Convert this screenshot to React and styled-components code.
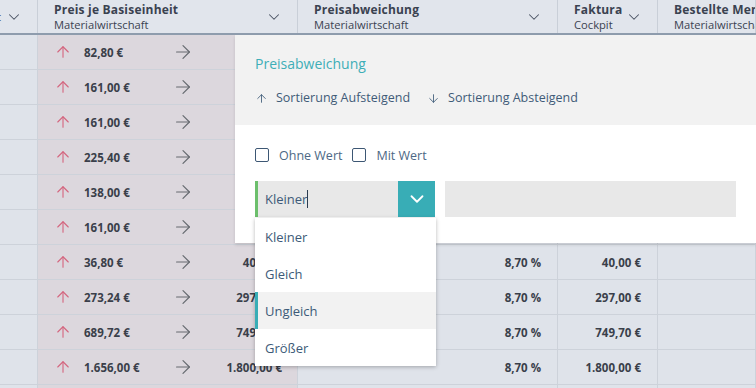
import styled, { createGlobalStyle } from 'styled-components';
import { ArrowDown, ArrowRight, ArrowUp, ChevronDown } from 'lucide-react';

const GlobalStyle = createGlobalStyle`
  html, body {
    margin: 0;
    padding: 0;
  }
  body {
    font-family: "Open Sans", "Liberation Sans", sans-serif;
    background: #dfe3ea;
    overflow: hidden;
  }
`;

const COLS = '38px 260px 260px 100px 1fr';

const rows = [
  ['82,80 €', '90,00 €'],
  ['161,00 €', '175,00 €'],
  ['161,00 €', '175,00 €'],
  ['225,40 €', '245,00 €'],
  ['138,00 €', '150,00 €'],
  ['161,00 €', '175,00 €'],
  ['36,80 €', '40,00 €'],
  ['273,24 €', '297,00 €'],
  ['689,72 €', '749,70 €'],
  ['1.656,00 €', '1.800,00 €'],
  ['92,00 €', '100,00 €'],
];

const options = ['Kleiner', 'Gleich', 'Ungleich', 'Größer'];

// --- table ---
const Page = styled.div`
  position: relative;
  width: 756px;
  height: 388px;
  overflow: hidden;
`;

const HeaderRow = styled.div`
  display: grid;
  grid-template-columns: ${COLS};
  height: 33px;
  background: #e1e5ec;
  border-bottom: 2px solid #8e9cad;
`;

const HeadCell = styled.div`
  display: flex;
  align-items: center;
  justify-content: ${p => (p.$end ? 'flex-end' : 'flex-start')};
  gap: 4px;
  padding: 0 14px 0 16px;
  border-right: 1px solid #c9cfd8;
  overflow: hidden;
  color: #3a4250;
  white-space: nowrap;

  svg {
    flex-shrink: 0;
    color: #4a5262;
  }
`;

const HeadText = styled.div`
  flex: ${p => (p.$fixed ? 'none' : 1)};
  min-width: 0;
  line-height: 15px;
`;

const HeadTitle = styled.div`
  font-size: 12px;
  font-weight: 700;
  letter-spacing: 0.2px;
`;

const HeadSub = styled.div`
  font-size: 11.2px;
`;

const Row = styled.div`
  display: grid;
  grid-template-columns: ${COLS};
  height: 34px;
  border-bottom: 1px solid #cdd2da;
`;

const Cell = styled.div`
  display: flex;
  align-items: center;
  justify-content: flex-end;
  padding: 0 16px 0 15px;
  background: ${p => (p.$hl ? '#dcd7dd' : '#dfe3ea')};
  border-right: 1px solid #cdd2da;
  font-size: 11.5px;
  font-weight: 700;
  color: #3a3f4a;
  white-space: nowrap;
`;

const PriceCell = styled(Cell)`
  justify-content: flex-start;
  padding: 0 15px 0 16px;
`;

const UpMark = styled(ArrowUp)`
  color: #d4667f;
  flex-shrink: 0;
`;

const NextMark = styled(ArrowRight)`
  color: #666a70;
  flex-shrink: 0;
`;

const OldValue = styled.span`
  width: 88px;
  margin-left: 12px;
`;

const NewValue = styled.span`
  flex: 1;
  text-align: right;
`;

// --- filter panel ---
const Panel = styled.div`
  position: absolute;
  left: 235px;
  top: 35px;
  right: 0;
  background: #fff;
  box-shadow: 0 2px 3px rgba(0, 0, 0, 0.12);
`;

const PanelHead = styled.div`
  background: #f2f2f2;
  padding: 19px 20px 18px;
`;

const Title = styled.div`
  font-size: 14px;
  line-height: 20px;
  color: #3eaeb7;
  margin-bottom: 15px;
`;

const SortRow = styled.div`
  display: flex;
  gap: 17px;
`;

const SortBtn = styled.div`
  display: flex;
  align-items: center;
  gap: 8px;
  font-size: 12.5px;
  line-height: 18px;
  color: #3f5b78;
`;

const PanelBody = styled.div`
  padding: 21px 20px 26px;
`;

const CheckRow = styled.div`
  display: flex;
  align-items: center;
  gap: 10px;
  height: 18px;
`;

const Check = styled.label`
  display: flex;
  align-items: center;
  gap: 10px;
  font-size: 12.5px;
  color: #4d6885;
`;

const Box = styled.span`
  width: 12px;
  height: 12px;
  border: 1.5px solid #3d5774;
  border-radius: 2px;
`;

const FieldRow = styled.div`
  display: flex;
  gap: 10px;
  height: 36px;
  margin-top: 17px;
`;

const Select = styled.div`
  width: 177px;
  display: flex;
  background: #e8e8e8;
  border-left: 3px solid #6cbf6c;
`;

const SelectText = styled.div`
  flex: 1;
  display: flex;
  align-items: center;
  padding-left: 7px;
  font-size: 13px;
  color: #3d5a78;
`;

const Caret = styled.span`
  width: 1px;
  height: 18px;
  background: #2b3c50;
`;

const SelectBtn = styled.div`
  width: 37px;
  display: flex;
  align-items: center;
  justify-content: center;
  background: #38adb6;
  color: #fff;
`;

const ValueField = styled.div`
  flex: 1;
  background: #e8e8e8;
`;

const Menu = styled.div`
  position: absolute;
  left: 20px;
  top: 183px;
  width: 181px;
  background: #fff;
  box-shadow: 0 1px 4px rgba(0, 0, 0, 0.28);
`;

const Option = styled.div`
  height: 37px;
  display: flex;
  align-items: center;
  padding-left: 10px;
  font-size: 13px;
  color: #3d5a78;
  background: ${p => (p.$active ? '#f2f2f2' : '#fff')};
  box-shadow: ${p => (p.$active ? 'inset 3px 0 0 #38adb6' : 'none')};
`;

export default function App() {
  return (
    <Page>
      <GlobalStyle />
      <HeaderRow>
        <HeadCell $end>
          <HeadText $fixed>
            <HeadSub>Einheit</HeadSub>
          </HeadText>
          <ChevronDown size={18} strokeWidth={1.4} />
        </HeadCell>
        <HeadCell>
          <HeadText>
            <HeadTitle>Preis je Basiseinheit</HeadTitle>
            <HeadSub>Materialwirtschaft</HeadSub>
          </HeadText>
          <ChevronDown size={18} strokeWidth={1.4} />
        </HeadCell>
        <HeadCell>
          <HeadText>
            <HeadTitle>Preisabweichung</HeadTitle>
            <HeadSub>Materialwirtschaft</HeadSub>
          </HeadText>
          <ChevronDown size={18} strokeWidth={1.4} />
        </HeadCell>
        <HeadCell>
          <HeadText>
            <HeadTitle>Faktura</HeadTitle>
            <HeadSub>Cockpit</HeadSub>
          </HeadText>
          <ChevronDown size={18} strokeWidth={1.4} />
        </HeadCell>
        <HeadCell>
          <HeadText>
            <HeadTitle>Bestellte Menge</HeadTitle>
            <HeadSub>Materialwirtschaft</HeadSub>
          </HeadText>
        </HeadCell>
      </HeaderRow>

      {rows.map(([oldPrice, newPrice], i) => (
        <Row key={i}>
          <Cell />
          <PriceCell $hl>
            <UpMark size={18} strokeWidth={1.5} />
            <OldValue>{oldPrice}</OldValue>
            <NextMark size={22} strokeWidth={1.3} />
            <NewValue>{newPrice}</NewValue>
          </PriceCell>
          <Cell>8,70 %</Cell>
          <Cell>{newPrice}</Cell>
          <Cell />
        </Row>
      ))}

      <Panel>
        <PanelHead>
          <Title>Preisabweichung</Title>
          <SortRow>
            <SortBtn>
              <ArrowUp size={13} strokeWidth={1.6} />
              Sortierung Aufsteigend
            </SortBtn>
            <SortBtn>
              <ArrowDown size={13} strokeWidth={1.6} />
              Sortierung Absteigend
            </SortBtn>
          </SortRow>
        </PanelHead>
        <PanelBody>
          <CheckRow>
            <Check>
              <Box />
              Ohne Wert
            </Check>
            <Check>
              <Box />
              Mit Wert
            </Check>
          </CheckRow>
          <FieldRow>
            <Select>
              <SelectText>
                Kleiner
                <Caret />
              </SelectText>
              <SelectBtn>
                <ChevronDown size={22} strokeWidth={2} />
              </SelectBtn>
            </Select>
            <ValueField />
          </FieldRow>
        </PanelBody>
        <Menu>
          {options.map(o => (
            <Option key={o} $active={o === 'Ungleich'}>
              {o}
            </Option>
          ))}
        </Menu>
      </Panel>
    </Page>
  );
}
